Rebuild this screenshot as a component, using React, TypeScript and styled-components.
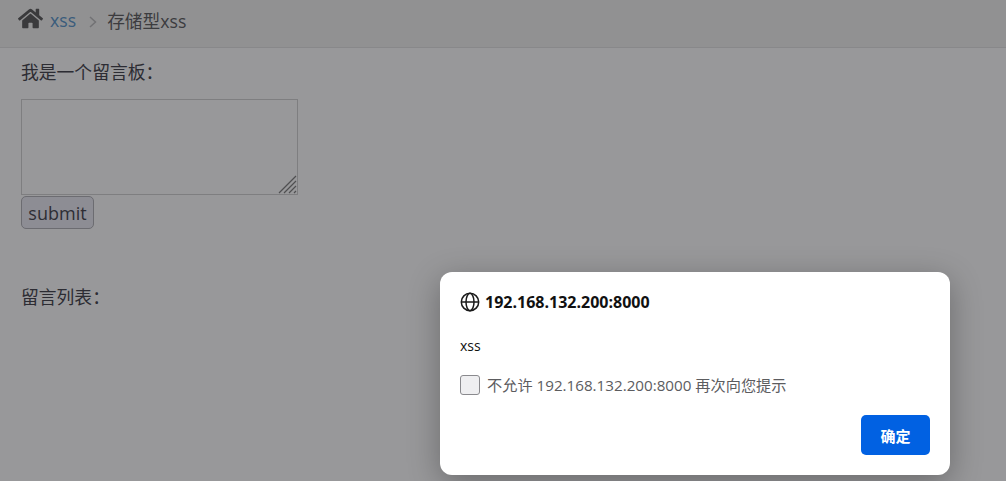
import React from "react";
import styled, { createGlobalStyle } from "styled-components";
import { FaHome } from "react-icons/fa";

const Global = createGlobalStyle`
  html, body { margin: 0; padding: 0; height: 100%; overflow: hidden; background: #98989a; }
  body { font-family: "Open Sans", "Noto Sans CJK SC", sans-serif; }
  #root { height: 100%; }
`;

const Page = styled.div`
  position: relative;
  width: 1006px;
  height: 481px;
  overflow: hidden;
  background: #98989a;
  color: #2c2c33;
`;

const Breadcrumb = styled.nav`
  display: flex;
  align-items: center;
  height: 48px;
  padding: 0 0 7px 18px;
  box-sizing: border-box;
  background: #919192;
  border-bottom: 1px solid #88888a;
  font-size: 17.7px;
  color: #3c3c3f;
`;

const HomeIcon = styled(FaHome)`
  width: 25px;
  height: 25px;
  color: #3a3a3c;
  margin: -4px 7px 0 0;
`;

const Crumb = styled.span`
  color: #3a5c7c;
`;

const Sep = styled.svg`
  width: 8px;
  height: 12px;
  margin: 3px 10px 0 13px;
  fill: none;
  stroke: #727274;
  stroke-width: 1.5;
`;

const Content = styled.main`
  padding: 12px 0 0 21px;
  font-size: 17.8px;
  color: #2c2c33;
`;

const Label = styled.div`
  line-height: 25px;
`;

const Form = styled.form`
  display: flex;
  flex-direction: column;
  align-items: flex-start;
  margin-top: 14px;
`;

const AreaWrap = styled.div`
  position: relative;
  width: 277px;
  height: 96px;
`;

const Area = styled.textarea`
  display: block;
  width: 100%;
  height: 100%;
  padding: 0;
  margin: 0;
  box-sizing: border-box;
  border: 1px solid #7e7e80;
  border-radius: 0;
  background: transparent;
  outline: none;
  resize: none;
`;

const Grip = styled.svg`
  position: absolute;
  right: 1px;
  bottom: 1px;
  width: 19px;
  height: 19px;
  fill: none;
  stroke: #4f4f51;
  stroke-width: 1.2;
`;

const Submit = styled.button`
  height: 33px;
  width: 73px;
  margin-top: 1px;
  padding: 0;
  font: 18px "Open Sans", sans-serif;
  color: #2e2e34;
  background: #8d8d94;
  border: 1px solid #6c6c71;
  border-radius: 5px;
`;

const ListLabel = styled(Label)`
  margin-top: 56px;
`;

const Dialog = styled.section`
  position: absolute;
  left: 440px;
  top: 272px;
  width: 510px;
  height: 203px;
  box-sizing: border-box;
  padding: 20px;
  background: #fff;
  border-radius: 12px;
  box-shadow: 0 8px 32px rgba(0, 0, 0, 0.3);
  display: flex;
  flex-direction: column;
`;

const Title = styled.h2`
  display: flex;
  align-items: center;
  gap: 5px;
  margin: 0 0 1px;
  height: 20px;
  font: 700 16px "Open Sans", "Noto Sans CJK SC", sans-serif;
  color: #111;
`;

const Globe = styled.svg`
  width: 20px;
  height: 20px;
  fill: none;
  stroke: #1a1a1a;
  stroke-width: 1.5;
`;

const Message = styled.p`
  margin: 24px 0 0;
  font: 14px/18px "Open Sans", sans-serif;
  color: #111;
`;

const CheckRow = styled.label`
  display: flex;
  align-items: center;
  gap: 7px;
  margin-top: 20px;
  height: 20px;
  font: 15.2px/18px "Open Sans", "Noto Sans CJK SC", sans-serif;
  color: #5c5c5f;
`;

const Box = styled.span`
  width: 18px;
  height: 18px;
  border: 1px solid #8a8a8e;
  border-radius: 3px;
  background: #efeff1;
`;

const Footer = styled.div`
  display: flex;
  justify-content: flex-end;
  margin-top: auto;
`;

const Confirm = styled.button`
  width: 69px;
  height: 40px;
  border: none;
  border-radius: 5px;
  background: #0161e2;
  color: #fff;
  font: 700 15px "Noto Sans CJK SC", sans-serif;
  padding: 0;
`;

export default function App() {
  return (
    <Page>
      <Global />
      <Breadcrumb>
        <HomeIcon />
        <Crumb>xss</Crumb>
        <Sep viewBox="0 0 8 12"><path d="M1 1l5.5 5L1 11" /></Sep>
        <span>存储型xss</span>
      </Breadcrumb>
      <Content>
        <Label>我是一个留言板：</Label>
        <Form onSubmit={(e) => e.preventDefault()}>
          <AreaWrap>
            <Area />
            <Grip viewBox="0 0 19 19">
              <path d="M1 18L18 1M6 18L18 6M11 18l7-7M16 18l2-2" />
            </Grip>
          </AreaWrap>
          <Submit type="submit">submit</Submit>
        </Form>
        <ListLabel>留言列表：</ListLabel>
      </Content>
      <Dialog>
        <Title>
          <Globe viewBox="0 0 20 20">
            <circle cx="10" cy="10" r="8.7" />
            <ellipse cx="10" cy="10" rx="4" ry="8.7" />
            <path d="M1.5 10h17" />
          </Globe>
          192.168.132.200:8000
        </Title>
        <Message>xss</Message>
        <CheckRow>
          <Box />
          不允许 192.168.132.200:8000 再次向您提示
        </CheckRow>
        <Footer>
          <Confirm type="button">确定</Confirm>
        </Footer>
      </Dialog>
    </Page>
  );
}
